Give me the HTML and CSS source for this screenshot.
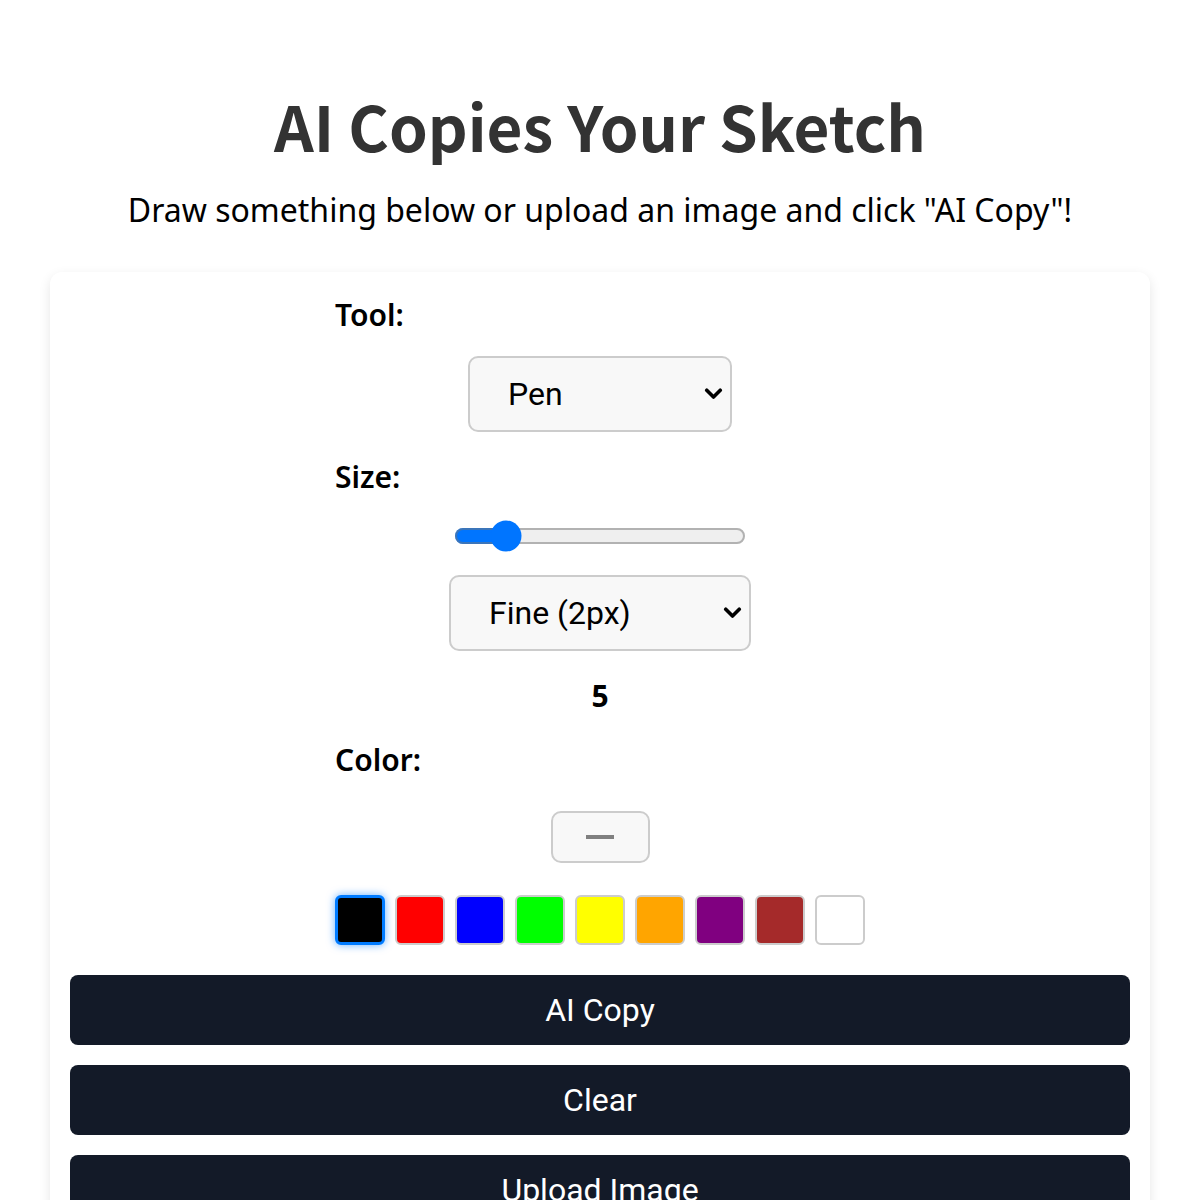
FILE: index.html
```html
<!DOCTYPE html>
<html lang="en">
<head>
<meta charset="utf-8">
<title>AI Copies Your Sketch</title>
<link rel="stylesheet" href="styles.css">
</head>
<body>
<header class="header">
  <h1 class="title">AI Copies Your Sketch</h1>
  <p class="subtitle">Draw something below or upload an image and click "AI Copy"!</p>
</header>
<main class="card">
  <div class="controls">
    <label class="label label-tool">Tool:</label>
    <div class="select-box select-tool">
      <span class="select-text">Pen</span>
      <svg class="chev" viewBox="0 0 12 8" width="19" height="12"><path d="M1.5 1.5 L6 6 L10.5 1.5" fill="none" stroke="#000" stroke-width="2.4" stroke-linecap="round" stroke-linejoin="round"/></svg>
    </div>
    <label class="label label-size">Size:</label>
    <input class="range" type="range" min="1" max="30" value="5">
    <div class="select-box select-size">
      <span class="select-text">Fine (2px)</span>
      <svg class="chev" viewBox="0 0 12 8" width="19" height="12"><path d="M1.5 1.5 L6 6 L10.5 1.5" fill="none" stroke="#000" stroke-width="2.4" stroke-linecap="round" stroke-linejoin="round"/></svg>
    </div>
    <div class="size-value">5</div>
    <label class="label label-color">Color:</label>
    <div class="color-btn"><span class="dash"></span></div>
    <div class="swatches">
      <span class="swatch selected" style="background:#000000"></span>
      <span class="swatch" style="background:#ff0000"></span>
      <span class="swatch" style="background:#0000ff"></span>
      <span class="swatch" style="background:#00ff00"></span>
      <span class="swatch" style="background:#ffff00"></span>
      <span class="swatch" style="background:#ffa500"></span>
      <span class="swatch" style="background:#800080"></span>
      <span class="swatch" style="background:#a52a2a"></span>
      <span class="swatch" style="background:#ffffff"></span>
    </div>
  </div>
  <div class="actions">
    <button class="btn">AI Copy</button>
    <button class="btn">Clear</button>
    <button class="btn">Upload Image</button>
  </div>
</main>
</body>
</html>
```
FILE: styles.css
```css
html, body {
  margin: 0;
  padding: 0;
  background: #ffffff;
}
body {
  font-family: "Noto Sans", "Open Sans", sans-serif;
  color: #000;
}
.header {
  text-align: center;
  padding-top: 81px;
}
.title {
  margin: 0;
  font-family: "Noto Sans CJK JP", "Noto Sans", sans-serif;
  font-size: 62px;
  font-weight: 700;
  color: #333333;
  line-height: 88px;
}
.subtitle {
  margin: 19px 0 0;
  font-size: 32px;
  line-height: 44px;
}
.card {
  margin: 40px 50px 0;
  padding: 20px;
  background: #fff;
  border-radius: 12px;
  box-shadow: 0 4px 12px rgba(0, 0, 0, 0.1);
}
.controls {
  width: 530px;
  margin: 0 auto;
  display: flex;
  flex-direction: column;
  align-items: center;
}
.label {
  align-self: stretch;
  font-size: 30px;
  font-weight: 600;
  line-height: 41px;
}
.label-tool {
  margin-top: 2px;
}
.label-size {
  margin-top: 24px;
}
.label-color {
  margin-top: 23px;
}
.select-box {
  box-sizing: border-box;
  height: 76px;
  border: 2px solid #cccccc;
  border-radius: 10px;
  background: #f8f8f8;
  display: flex;
  align-items: center;
  justify-content: space-between;
  padding: 0 7px 0 38px;
  font-family: Roboto, "Noto Sans", sans-serif;
  font-size: 32px;
}
.select-tool {
  width: 264px;
  margin-top: 21px;
}
.select-size {
  width: 302px;
  margin-top: 23px;
}
.chev {
  display: block;
}
.range {
  width: 146px;
  zoom: 2;
  margin: 11.5px 0 0;
  accent-color: #0075ff;
}
.size-value {
  font-size: 30px;
  font-weight: 700;
  line-height: 41px;
  margin-top: 24px;
}
.color-btn {
  box-sizing: border-box;
  width: 99px;
  height: 52px;
  margin-top: 31px;
  border: 2px solid #cccccc;
  border-radius: 10px;
  background: #f8f8f8;
  display: flex;
  align-items: center;
  justify-content: center;
}
.dash {
  width: 28px;
  height: 4px;
  background: #808080;
}
.swatches {
  margin-top: 32px;
  display: flex;
  gap: 10px;
}
.swatch {
  box-sizing: border-box;
  width: 50px;
  height: 50px;
  border: 2px solid #cccccc;
  border-radius: 6px;
}
.swatch.selected {
  border: 3px solid #007bff;
  box-shadow: 0 0 8px rgba(0, 123, 255, 0.6);
}
.actions {
  margin-top: 30px;
  display: flex;
  flex-direction: column;
  gap: 20px;
}
.btn {
  height: 70px;
  border: none;
  border-radius: 8px;
  background: #131a28;
  color: #fff;
  font-family: Roboto, sans-serif;
  font-size: 32px;
  padding: 0;
}
```
